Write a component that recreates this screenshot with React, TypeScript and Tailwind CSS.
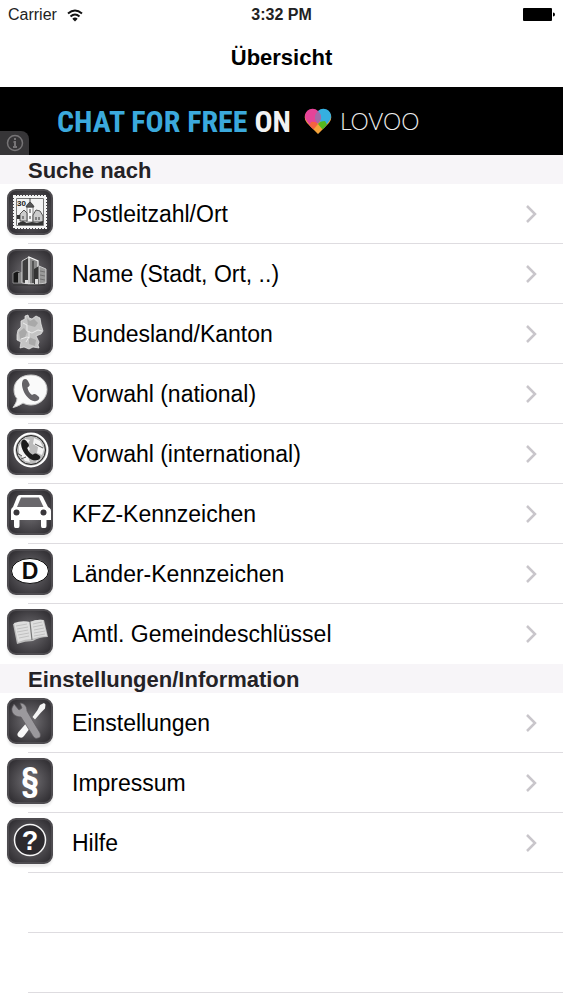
import type { ReactNode } from "react";

function Tile({ children }: { children: ReactNode }) {
  return (
    <span className="mt-[5px] block size-[46px] shrink-0 self-start overflow-hidden rounded-[9px] border-2 border-[#4e4c50] bg-radial from-[#757377] to-[#2b292d] shadow-[0_3px_2px_#ededed]">
      <svg viewBox="2 2 42 42" className="size-full" aria-hidden="true">
        {children}
      </svg>
    </span>
  );
}

const handset =
  "M16 11c2-2 4-1 5 1l1.500 3c.6 1.500-.5 2.500-2 3.500.5 3 2 5.500 4.500 7.500 1.500-1 2.700-1.500 4-.5l2.500 2c1.500 1.300.8 3-1 4-3.500 2-8-.5-11-4.500-3.500-4.500-6-12-3.500-16z";

const icons = {
  stamp: (
    <>
      <path d="M7 7h32v32H7z" fill="#f4f4f4" stroke="#f4f4f4" strokeWidth="2" strokeDasharray="2 1" />
      <path d="M9.500 9.500h27v27h-27z" fill="#f3f3f3" stroke="#777" />
      <text x="10" y="17" fontSize="8" fontWeight="700" fontFamily="Liberation Sans" fill="#222">30</text>
      <path d="M20 18h6v15h-6z" fill="#fafafa" stroke="#555" strokeWidth=".7" />
      <path d="M19 18q1-3 4-5q3 2 4 5zM23 9v5" fill="#555" stroke="#444" />
      <path d="M13 25l4-4 3 3v8h-7zM26 26l3-5 4 1 3 5v6H26z" fill="#ccc" stroke="#555" />
      <path d="M10 26h3v4h-3zM11 34l5-2 4 2 5-1 5 1 6-2v4H11z" fill="#333" />
      <path d="M23 20v4M23 27v3M29 28v3M32 28v3M16 27v3" stroke="#333" />
    </>
  ),
  city: (
    <>
      <path d="M6 24l4-2 5 2v10H6z" fill="#161616" stroke="#aaa" strokeWidth=".7" />
      <path d="M11 24l4-1v11h-4z" fill="#888" />
      <path d="M15 12l7-4v27l-7-1z" fill="#3d3d3d" stroke="#eee" strokeWidth=".8" />
      <path d="M22 8l9 4v23h-9z" fill="#8a8a8a" stroke="#f5f5f5" strokeWidth="1.200" />
      <path d="M26 12v22" stroke="#555" strokeWidth="2" />
      <path d="M27 20l5-3v18h-5z" fill="#333" />
      <path d="M32 17l7 3v14l-7 1z" fill="#999" stroke="#ddd" strokeWidth=".8" />
      <path d="M33 22l5 1M33 26l5 1M33 30l5 1" stroke="#666" strokeWidth=".8" />
      <path d="M18 31h3v4h-3zM28 30h3v5h-3z" fill="#ddd" />
      <path d="M6 36h32" stroke="#333" />
    </>
  ),
  germany: (
    <>
      <path d="M18 7l3-1 1 3 3 1 4-3 4 2 1 6 2 7-2 3-5 2 3 6-1 3 1 3-6-1-4 2-5-2-4 1 1-6-4-2 0-5 1-5 3-3 0-6 4-2z" fill="#c4c4c4" stroke="#eee" strokeWidth=".7" />
      <path d="M20 9l3 3 4-2 4 4-3 4-7-2zM12 23l5-4 3 4-2 5-5 2zM22 28l7 3-1 6-6-2z" fill="#a9a9a9" />
      <path d="M16 14l4 2v6l5 2 6-3 4 1M14 30l6-2 3 1M22 22v6l-3 5" fill="none" stroke="#f4f4f4" strokeWidth=".8" />
    </>
  ),
  bubble: (
    <>
      <path d="M24 6c9 0 16 6 16 14.500S33 36 24 36c-3 0-6-.8-8-2-3 2-6 3.500-10 4.500 2-3 4-6 4-9-2-2-3-5-3-9C7 12 14 6 24 6z" fill="#fafafa" stroke="#ccc" />
      <path d={handset} fill="#656367" />
    </>
  ),
  globe: (
    <>
      <circle cx="24" cy="21" r="16.500" fill="#aaa" stroke="#fff" strokeWidth="2" />
      <circle cx="24" cy="21" r="14.500" fill="#bbb" stroke="#222" />
      <path d="M12 17l6-7 5 1-3 5 3 4-3 5 3 8-5-1-6-8zM27 9l6 3 4 8-2 6-5-2 1-6-5-3zM26 30l7-2-3 5z" fill="#f3f3f3" />
      <path d="M10 24l5 3M28 15l8 4M14 30l5-2" stroke="#555" />
      <path d={handset} fill="#1d1d1d" transform="rotate(-8 24 21)" />
    </>
  ),
  car: (
    <>
      <path d="M13 6h20q2 0 3 2l5 10q3 1 3 4v9H4v-9q0-3 2-4l4-10q1-2 3-2z" fill="#fff" />
      <path d="M14 8.500h18l4.500 9.500H10z" fill="#6a686c" />
      <path d="M7 30h5.500v7q0 2-1.500 2H8.500Q7 39 7 37zM34 30h5.500v7q0 2-1.500 2h-2.500q-1.500 0-1.500-2z" fill="#fff" />
      <circle cx="9.500" cy="23.500" r="3" fill="#39373b" />
      <circle cx="36.500" cy="23.500" r="3" fill="#39373b" />
    </>
  ),
  plate: (
    <>
      <ellipse cx="23" cy="22" rx="18.500" ry="12.500" fill="#fff" stroke="#111" />
      <text x="23" y="30" textAnchor="middle" fontSize="23" fontWeight="700" fontFamily="Liberation Sans" fill="#0c0c0c">D</text>
    </>
  ),
  book: (
    <>
      <path d="M6 15q9-3 17-2 7-3 14-2l4 17q-9 0-15 4-8 0-16 3z" fill="#bcbcbc" />
      <path d="M7 14q8-3 16-1l2 17q-7 0-14 3zM23 13q7-3 13-2l4 16q-8 0-15 3z" fill="#dedede" />
      <path d="M23 13l2 18" stroke="#777" strokeWidth="1.200" />
      <path d="M9 17l11-2M10 20l11-2M10 23l11-2M11 26l11-2M12 29l10-2M26 15l9-2M26 18l10-2M27 21l10-2M27 24l11-2M27 27l11-2" stroke="#bdbdbd" strokeWidth=".9" />
    </>
  ),
  tools: (
    <>
      <path d="M33 7l4-2 1.500 1.500-.5 4-4 4-6 7-2.500-2.500 5-7z" fill="#f5f5f5" />
      <path d="M22 22l4 4-9 12q-2 3-5 1-3-2-.5-5z" fill="#f8f8f8" />
      <path d="M7 6l5 6 3-2-2-5c4 0 7 3 7 8l13 22c1 3 0 5-2 5-2 1-4 0-5-2L14 19c-6 0-10-4-9-9z" fill="#9b999d" stroke="#5b595d" strokeWidth=".7" />
    </>
  ),
  paragraph: (
    <text x="23" y="33" textAnchor="middle" fontSize="33" fontWeight="700" fontFamily="Roboto Condensed, Liberation Sans" fill="#fff">§</text>
  ),
  help: (
    <>
      <circle cx="23" cy="22" r="15.500" fill="#2c2a2e" stroke="#f5f5f5" strokeWidth="1.500" />
      <text x="23" y="32" textAnchor="middle" fontSize="27" fontWeight="700" fontFamily="Liberation Sans" fill="#fff">?</text>
    </>
  ),
};

type Item = { label: string; icon: keyof typeof icons };

const searchItems: Item[] = [
  { label: "Postleitzahl/Ort", icon: "stamp" },
  { label: "Name (Stadt, Ort, ..)", icon: "city" },
  { label: "Bundesland/Kanton", icon: "germany" },
  { label: "Vorwahl (national)", icon: "bubble" },
  { label: "Vorwahl (international)", icon: "globe" },
  { label: "KFZ-Kennzeichen", icon: "car" },
  { label: "Länder-Kennzeichen", icon: "plate" },
  { label: "Amtl. Gemeindeschlüssel", icon: "book" },
];

const infoItems: Item[] = [
  { label: "Einstellungen", icon: "tools" },
  { label: "Impressum", icon: "paragraph" },
  { label: "Hilfe", icon: "help" },
];

function Section({ title, items, closed }: { title: string; items: Item[]; closed?: boolean }) {
  return (
    <section>
      <h2 className="h-[29px] bg-[#f7f5f8] pl-7 text-[22px] leading-8 font-bold text-[#242226]">{title}</h2>
      <ul>
        {items.map((item, i) => (
          <li key={item.label}>
            <a href="#" className="flex h-[59px] items-center pr-[26px] pl-[7px]">
              <Tile>{icons[item.icon]}</Tile>
              <span className="ml-[19px] flex-1 text-[23px] leading-7">{item.label}</span>
              <svg viewBox="0 0 12 18" className="h-[18px] w-3" fill="none" stroke="#c9c6cb" strokeWidth="2.500" aria-hidden="true">
                <path d="M2 1l8 8-8 8" />
              </svg>
            </a>
            <div className={closed || i < items.length - 1 ? "ml-7 h-px bg-[#dedce0]" : "h-px"} />
          </li>
        ))}
      </ul>
    </section>
  );
}

export default function App() {
  return (
    <div className="min-h-screen bg-white font-['Liberation_Sans',Arial,sans-serif] text-black">
      <header className="h-[87px]">
        <div className="grid h-[30px] grid-cols-3 items-center px-2 text-base">
          <div className="flex items-center gap-[10px] text-[#222]">
            <span>Carrier</span>
            <svg viewBox="0 0 16 13" className="h-[13px] w-4" fill="none" stroke="#111" strokeWidth="2" aria-hidden="true">
              <path d="M1 4.500q7-6 14 0M3.500 7.500q4.500-4 9 0" />
              <path d="M5.300 9.700q2.700-2.200 5.400 0L8 12.500z" fill="#111" stroke="none" />
            </svg>
          </div>
          <span className="text-center font-bold text-[#222]">3:32 PM</span>
          <svg viewBox="0 0 32 14" className="h-[14px] w-8 justify-self-end" aria-hidden="true">
            <rect width="29" height="13" rx="1" />
            <path d="M30 4.500q2 0 2 2t-2 2z" />
          </svg>
        </div>
        <h1 className="pt-[14px] text-center text-[22px] leading-7 font-bold">Übersicht</h1>
      </header>

      <aside className="relative h-[68px] bg-black">
        <a href="#" className="flex h-full items-center pl-[57px]">
          <span className="font-['Roboto_Condensed','Liberation_Sans_Narrow',sans-serif] text-[30px] font-bold whitespace-nowrap text-[#3ba9dc]">
            CHAT FOR FREE <span className="text-[#f2f2f2]">ON</span>
          </span>
          <svg viewBox="0 0 28 27" className="ml-[13px] h-[27px] w-7" aria-hidden="true">
            <path d="M14 26L3 15A7.500 7.500 0 0 1 14 4a7.500 7.500 0 0 1 11 11z" fill="#f5a33a" />
            <path d="M3 13.500A7.500 7.500 0 0 1 14 3q5 6 2 10l-8 7z" fill="#e64398" />
            <path d="M25 13.500A7.500 7.500 0 0 0 14 3q-1 6 2 10l4 7z" fill="#35afe0" />
            <path d="M14 3q-5 5-2 10l2 3 2-3q3-5-2-10z" fill="#a36aa8" />
            <path d="M7 14q4-1 7 2l-4.500 5.500-4-4z" fill="#f36240" />
            <path d="M21 13q-5 0-7 3l4.500 5.500 4.500-5z" fill="#55b81f" />
          </svg>
          <span className="ml-2 font-['Lato',sans-serif] text-[23px] leading-6 font-light text-[#eee]">LOVOO</span>
        </a>
        <button type="button" aria-label="Info" className="absolute bottom-0 left-0 flex h-6 w-[29px] items-center justify-center rounded-tr-lg bg-[#363537]">
          <svg viewBox="0 0 18 18" className="size-[18px]" fill="none" stroke="#777577" strokeWidth="1.500" aria-hidden="true">
            <circle cx="9" cy="9" r="7.500" />
            <path d="M9 4v2M7.500 8H9v5M7 13h4" strokeWidth="2" />
          </svg>
        </button>
      </aside>

      <main>
        <Section title="Suche nach" items={searchItems} />
        <Section title="Einstellungen/Information" items={infoItems} closed />
        <div className="ml-7 h-[60px] border-b border-[#dedce0]" />
        <div className="ml-7 h-[60px] border-b border-[#dedce0]" />
      </main>
    </div>
  );
}
